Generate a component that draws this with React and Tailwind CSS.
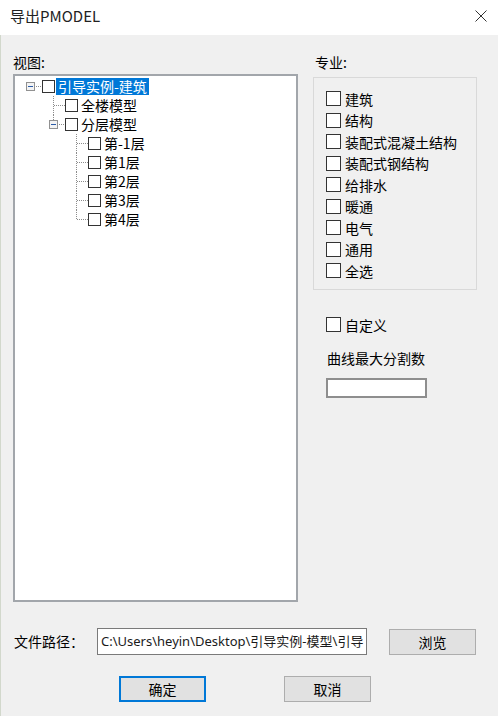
import React from "react";

const cjk = "font-['Microsoft_YaHei','Noto_Sans_CJK_SC',sans-serif]";

// one 23px column of the tree's connector lines
const Guide = ({ type }) => {
  const dot = { stroke: "#8c8c8c", strokeWidth: 1, strokeDasharray: "1 1" };
  return (
    <svg width="23" height="19" className="shrink-0 block">
      {(type === "tee" || type === "pipe") && <line x1="11.5" y1="0" x2="11.5" y2="19" {...dot} />}
      {(type === "last" || type === "lastBtn") && <line x1="11.5" y1="0" x2="11.5" y2="9" {...dot} />}
      {(type === "tee" || type === "last") && <line x1="12" y1="9.5" x2="23" y2="9.5" {...dot} />}
      {(type === "rootBtn" || type === "lastBtn") && (
        <>
          <line x1="17" y1="9.5" x2="23" y2="9.5" {...dot} />
          <rect x="7.5" y="5.5" width="8" height="8" fill="#f3f3f3" stroke="#919191" />
          <line x1="9" y1="9.5" x2="14" y2="9.5" stroke="#2b5ca8" />
        </>
      )}
    </svg>
  );
};

const TreeRow = ({ guides, label, selected }) => (
  <div className="flex items-center h-[19px]">
    {guides.map((g, i) => (
      <Guide key={i} type={g} />
    ))}
    <span className="w-[13px] h-[13px] border border-[#333] bg-white shrink-0" />
    <span
      className={
        selected
          ? "ml-[1px] px-[2px] h-[17px] leading-[17px] bg-[#0078d7] text-white text-[14px]"
          : "ml-[3px] leading-[17px] text-[14px] text-black"
      }
    >
      {label}
    </span>
  </div>
);

const treeRows = [
  { guides: ["rootBtn"], label: "引导实例-建筑", selected: true },
  { guides: ["none", "tee"], label: "全楼模型" },
  { guides: ["none", "lastBtn"], label: "分层模型" },
  { guides: ["none", "none", "tee"], label: "第-1层" },
  { guides: ["none", "none", "tee"], label: "第1层" },
  { guides: ["none", "none", "tee"], label: "第2层" },
  { guides: ["none", "none", "tee"], label: "第3层" },
  { guides: ["none", "none", "last"], label: "第4层" },
];

const disciplines = ["建筑", "结构", "装配式混凝土结构", "装配式钢结构", "给排水", "暖通", "电气", "通用", "全选"];

const Check = ({ label }) => (
  <div className="flex items-center h-[21.5px]">
    <span className="w-[15px] h-[15px] border border-[#333] bg-white shrink-0" />
    <span className="ml-[4px] text-[14px] leading-[20px] text-black">{label}</span>
  </div>
);

const Button = ({ children, primary }) => (
  <button
    type="button"
    className={
      "w-[87px] h-[26px] bg-[#e1e1e1] text-[14px] text-black leading-none flex items-center justify-center " +
      (primary ? "border-2 border-[#0078d7]" : "border border-[#adadad]")
    }
  >
    {children}
  </button>
);

export default function App() {
  return (
    <div className={`w-[498px] h-[716px] flex flex-col ${cjk}`}>
      {/* title bar */}
      <div className="h-[35px] bg-white flex items-center justify-between pl-[10px] pr-[11px] pb-[3px] shrink-0">
        <span className="text-[15px] text-[#222]">导出PMODEL</span>
        <svg width="12" height="12" viewBox="0 0 12 12">
          <path d="M0.5 0.5 L11.5 11.5 M11.5 0.5 L0.5 11.5" stroke="#333" strokeWidth="1" />
        </svg>
      </div>

      {/* body */}
      <div className="flex-1 bg-[#f0f0f0] border-l border-[#d2d8cc] flex flex-col">
        <div className="flex pl-[12px] pt-[17px]">
          <div className="w-[285px] flex flex-col">
            <div className="h-[20px] leading-[20px] text-[14px] text-black">视图:</div>
            <div className="mt-[2px] h-[528px] bg-white border-2 border-[#a2a6ab] pl-[4px] pt-[1px]">
              {treeRows.map((r, i) => (
                <TreeRow key={i} {...r} />
              ))}
            </div>
          </div>

          <div className="ml-[15px] w-[164px] flex flex-col">
            <div className="h-[20px] leading-[20px] text-[14px] text-black pl-[2px]">专业:</div>
            <div className="mt-[5px] h-[213px] border border-[#d9d9d9] pl-[12px] pt-[10px]">
              {disciplines.map((d) => (
                <Check key={d} label={d} />
              ))}
            </div>
            <div className="mt-[24px] pl-[13px]">
              <Check label="自定义" />
            </div>
            <div className="mt-[12px] pl-[14px] h-[20px] leading-[20px] text-[14px] text-black">曲线最大分割数</div>
            <div className="mt-[10px] ml-[13px] w-[101px] h-[20px] bg-white border-2 border-[#8e8e8e]" />
          </div>
        </div>

        {/* file path */}
        <div className="flex items-center mt-[26px] pl-[13px]">
          <span className="w-[83px] text-[14px] text-black">文件路径：</span>
          <div className="w-[270px] h-[27px] bg-white border border-[#7a7a7a] pl-[3px] overflow-hidden whitespace-nowrap flex items-center text-[13px] text-[#1a1a1a] font-['Noto_Sans','Noto_Sans_CJK_SC',sans-serif]">
            C:\Users\heyin\Desktop\引导实例-模型\引导
          </div>
          <div className="ml-[22px]">
            <Button>浏览</Button>
          </div>
        </div>

        {/* actions */}
        <div className="flex mt-[21px] pl-[118px] gap-[78px]">
          <Button primary>确定</Button>
          <Button>取消</Button>
        </div>
      </div>
    </div>
  );
}
